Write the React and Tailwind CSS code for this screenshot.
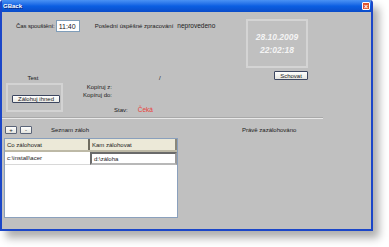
export default function App() {
  return (
    <div className="w-[389px] h-[247px] bg-white font-['Liberation_Sans',Arial,sans-serif] text-[6px] leading-none text-[#1a1a1a]">
      <div className="w-[373px] h-[231px] flex flex-col bg-[#c0c0c0] border-x-2 border-b-2 border-[#1b46c8] rounded-t-[3px] shadow-[6px_7px_9px_rgba(0,0,0,0.32)] overflow-hidden">
        {/* title bar */}
        <div className="h-[12px] shrink-0 flex items-center justify-between pl-[1px] pr-[1px] bg-gradient-to-b from-[#4a92f4] via-[#0b5fe2] to-[#0a4cc9]">
          <span className="text-white font-bold text-[6px] [text-shadow:1px_1px_0_#0a2a80]">GBack</span>
          <span className="w-[8px] h-[8px] flex items-center justify-center rounded-[1px] border border-white bg-[#e0542e] text-white text-[7px] font-bold leading-none">×</span>
        </div>

        {/* top section */}
        <div className="h-[105px] shrink-0 flex">
          <div className="w-[244px] flex flex-col">
            <div className="mt-[8px] pl-[14px] h-[12px] flex items-center">
              <span className="tracking-[-0.1px]">Čas spouštění:</span>
              <span className="ml-[1px] w-[24px] h-[12px] flex items-center pl-[2px] bg-white border border-[#7f9db9] text-[7px]">11:40</span>
              <span className="ml-[15px]">Poslední úspěšné zpracování</span>
              <span className="ml-[4px] text-[6.5px]">neprovedeno</span>
            </div>

            <div className="mt-[41px] flex">
              <div className="ml-[4px] w-[57px] flex flex-col">
                <div className="h-[8px] flex items-end justify-center pr-[3px]">Test</div>
                <div className="mt-[2px] h-[29px] border-2 border-[#d3d3d3] flex items-start pt-[10px] pl-[4px]">
                  <div className="w-[48px] h-[8px] flex items-center justify-center rounded-[1px] border border-[#3c4660] bg-gradient-to-b from-white to-[#ebebe6] text-[6px]">Zálohuj ihned</div>
                </div>
              </div>
              <div className="ml-[19px] w-[100px] flex flex-col">
                <div className="h-[8px] flex items-end pl-[77px]">/</div>
                <div className="mt-[2px] h-[8px] flex items-center justify-end w-[30px]">Kopíruj z:</div>
                <div className="h-[8px] flex items-center justify-end w-[30px]">Kopíruj do:</div>
                <div className="mt-[7px] h-[8px] flex items-center pl-[32px]">
                  <span>Stav:</span>
                  <span className="ml-[10px] text-[#e8403c] text-[6.5px]">Čeká</span>
                </div>
              </div>
            </div>
          </div>

          <div className="w-[62px] flex flex-col items-end mt-[7px]">
            <div className="w-[62px] h-[49px] border-2 border-[#d4d4d4] flex flex-col items-center justify-center gap-[5px] text-[#f4f4f4] font-bold italic text-[8.5px]">
              <span>28.10.2009</span>
              <span>22:02:18</span>
            </div>
            <div className="mt-[3px] w-[34px] h-[9px] flex items-center justify-center rounded-[1px] border border-[#3c4660] bg-gradient-to-b from-white to-[#e6e6e0]">Schovat</div>
          </div>
        </div>

        {/* separator */}
        <div className="w-[321px] h-[2px] shrink-0 border-t border-[#a9a9a9] border-b border-b-[#e8e8e8]" />

        {/* list header */}
        <div className="mt-[7px] h-[8px] shrink-0 flex items-center">
          <div className="w-[240px] flex items-center pl-[3px]">
            <div className="w-[12px] h-[8px] flex items-center justify-center rounded-[1px] border border-[#5a6478] bg-gradient-to-b from-white to-[#e4e4de] text-[6px]">+</div>
            <div className="ml-[3px] w-[12px] h-[8px] flex items-center justify-center rounded-[1px] border border-[#5a6478] bg-gradient-to-b from-white to-[#e4e4de] text-[6px]">-</div>
            <span className="ml-[19px]">Seznam záloh</span>
          </div>
          <span>Právě zazálohováno</span>
        </div>

        {/* table */}
        <div className="mt-[4px] ml-[2px] w-[174px] h-[80px] shrink-0 bg-white border border-[#8aa0bd] flex flex-col">
          <div className="h-[13px] flex bg-[#ece9d8] border-b-2 border-[#bdb9a6] w-[172px]">
            <div className="w-[85px] flex items-center pl-[2px] border-r-2 border-[#6f6c60]">Co zálohovat</div>
            <div className="flex-1 flex items-center pl-[2px] border-r-2 border-[#8a877a]">Kam zálohovat</div>
          </div>
          <div className="h-[13px] flex w-[172px]">
            <div className="w-[85px] flex items-center pl-[2px] border-b border-[#d8d8d8]">c:\install\acer</div>
            <div className="flex-1 flex items-center pl-[2px] border-t-2 border-l-2 border-[#6a6a6a] border-b-2 border-r-2 border-b-[#b8b8b8] border-r-[#9a9a9a]">d:\záloha</div>
          </div>
        </div>
      </div>
    </div>
  )
}
